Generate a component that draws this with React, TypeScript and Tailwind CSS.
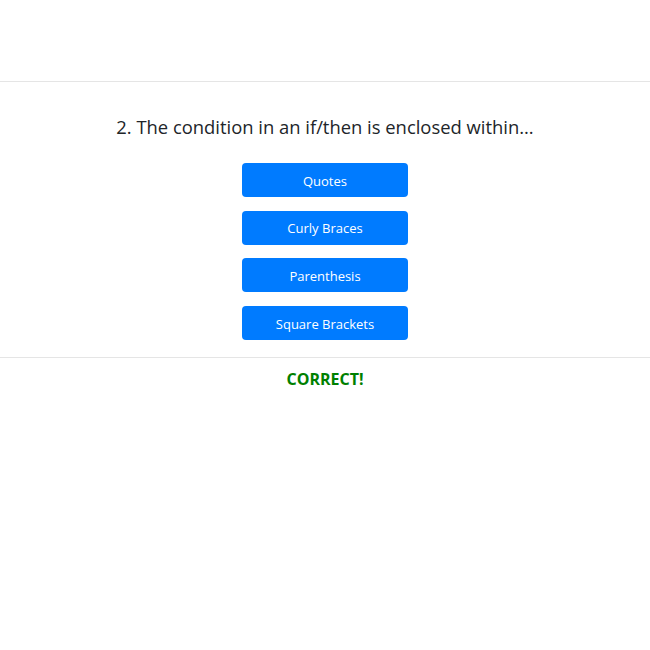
export default function App() {
  const opts = ["Quotes", "Curly Braces", "Parenthesis", "Square Brackets"];
  return (
    <div className="w-[650px] h-[650px] bg-white text-[#212529]" style={{ fontFamily: '"Open Sans", "Noto Sans", sans-serif' }}>
      <div className="h-[81px]" />
      <div className="h-px bg-[#e5e5e5]" />
      <div className="flex flex-col items-center">
        <h2 className="mt-[33px] text-[18.4px] leading-[24px] font-medium">2. The condition in an if/then is enclosed within...</h2>
        <div className="mt-[24px] flex flex-col items-center gap-[13.7px]">
          {opts.map((o) => (
            <button key={o} className="w-[166px] h-[34px] pt-[3px] rounded-[4px] bg-[#007bff] text-white text-[13px] flex items-center justify-center">
              {o}
            </button>
          ))}
        </div>
      </div>
      <div className="mt-[17px] h-px bg-[#e5e5e5]" />
      <div className="mt-[11px] text-center text-[16px] leading-[20px] font-bold text-[#008000]">CORRECT!</div>
    </div>
  );
}
